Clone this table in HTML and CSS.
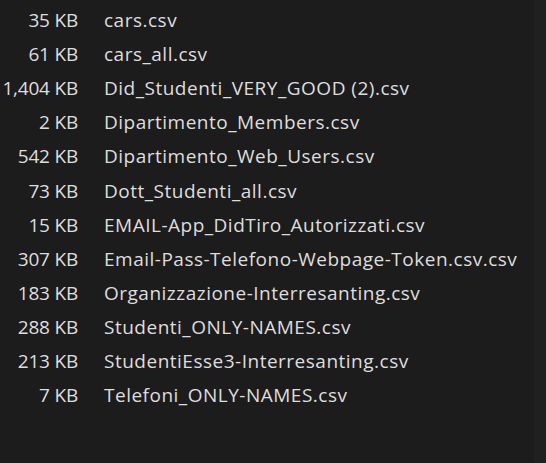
FILE: index.html
```html
<!DOCTYPE html>
<html>
<head>
<meta charset="utf-8">
<link rel="stylesheet" href="styles.css">
</head>
<body>
<div class="pane">
  <div class="list">
    <div class="row"><span class="size">35 KB</span><span class="name">cars.csv</span></div>
    <div class="row"><span class="size">61 KB</span><span class="name">cars_all.csv</span></div>
    <div class="row"><span class="size">1,404 KB</span><span class="name">Did_Studenti_VERY_GOOD (2).csv</span></div>
    <div class="row"><span class="size">2 KB</span><span class="name">Dipartimento_Members.csv</span></div>
    <div class="row"><span class="size">542 KB</span><span class="name">Dipartimento_Web_Users.csv</span></div>
    <div class="row"><span class="size">73 KB</span><span class="name">Dott_Studenti_all.csv</span></div>
    <div class="row"><span class="size">15 KB</span><span class="name">EMAIL-App_DidTiro_Autorizzati.csv</span></div>
    <div class="row"><span class="size">307 KB</span><span class="name">Email-Pass-Telefono-Webpage-Token.csv.csv</span></div>
    <div class="row"><span class="size">183 KB</span><span class="name">Organizzazione-Interresanting.csv</span></div>
    <div class="row"><span class="size">288 KB</span><span class="name">Studenti_ONLY-NAMES.csv</span></div>
    <div class="row"><span class="size">213 KB</span><span class="name">StudentiEsse3-Interresanting.csv</span></div>
    <div class="row"><span class="size">7 KB</span><span class="name">Telefoni_ONLY-NAMES.csv</span></div>
  </div>
  <div class="edge"></div>
</div>
</body>
</html>
```
FILE: styles.css
```css
html, body {
  margin: 0;
  padding: 0;
  background: #1c1c1c;
}
.pane {
  display: flex;
  width: 546px;
  height: 463px;
  overflow: hidden;
}
.list {
  flex: 1;
  padding-top: 3px;
  font-family: "Open Sans", "Noto Sans", sans-serif;
  font-size: 19px;
  color: #dedede;
}
.row {
  display: flex;
  align-items: center;
  height: 34.1px;
  white-space: nowrap;
}
.size {
  width: 78px;
  text-align: right;
  flex: none;
  letter-spacing: -0.2px;
}
.name {
  margin-left: 26px;
  letter-spacing: 0.5px;
}
.edge {
  width: 12px;
  background: #202020;
}
```
